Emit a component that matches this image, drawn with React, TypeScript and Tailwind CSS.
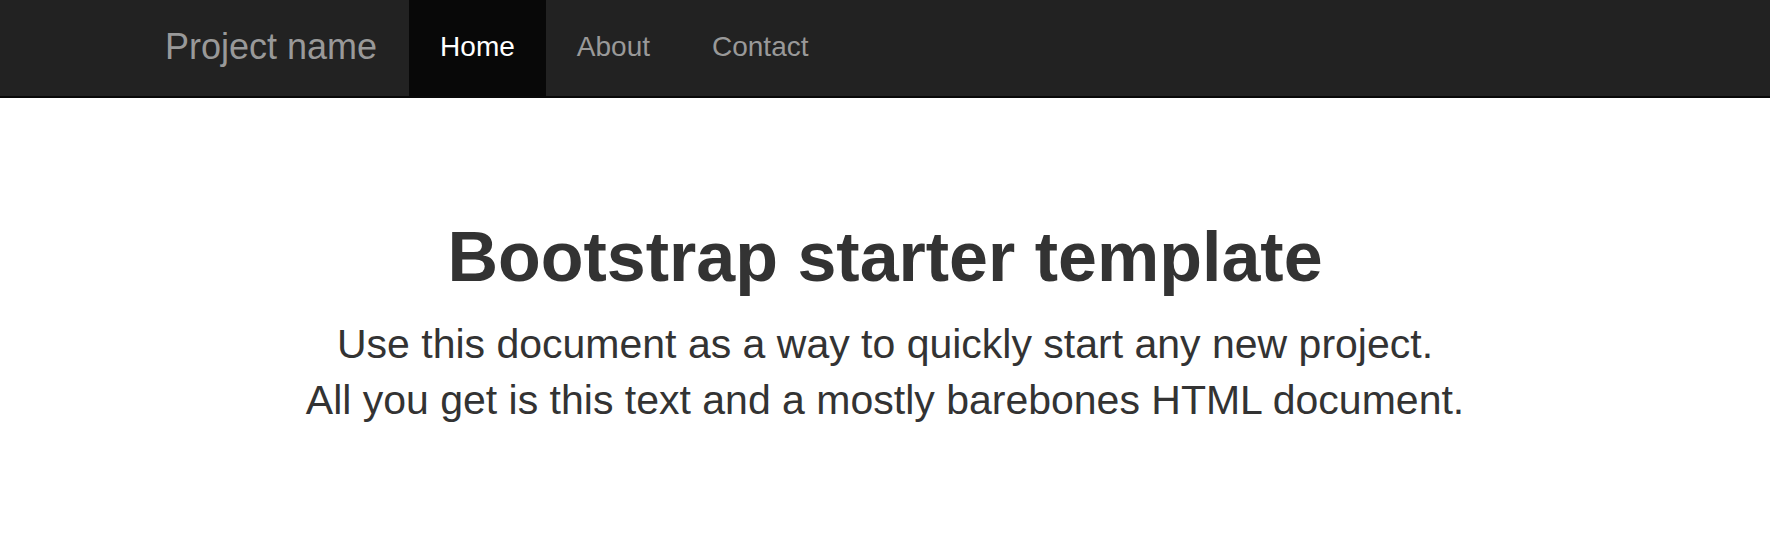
const NAV_ITEMS = [
  { label: 'Home', active: true },
  { label: 'About', active: false },
  { label: 'Contact', active: false },
];

function Navbar() {
  return (
    <nav className="h-[98px] border-b-2 border-[#080808] bg-[#222]">
      <div className="flex h-full items-stretch pl-[134px]">
        <a
          href="#"
          className="flex items-center pl-[31px] pr-[32px] pb-[2px] text-[36px] text-[#999] no-underline"
        >
          Project name
        </a>
        <ul className="flex items-stretch">
          {NAV_ITEMS.map((item) => (
            <li key={item.label} className="flex">
              <a
                href="#"
                className={`flex items-center px-[31px] pb-[3px] text-[28px] ${
                  item.active ? 'bg-[#080808] text-white' : 'text-[#999]'
                }`}
              >
                {item.label}
              </a>
            </li>
          ))}
        </ul>
      </div>
    </nav>
  );
}

export default function App() {
  return (
    <div className="min-h-[536px] bg-white font-['Liberation_Sans',Arial,sans-serif] text-[#333]">
      <Navbar />
      <main className="text-center">
        <h1 className="mt-[119px] text-[70px] font-bold leading-[80px]">
          Bootstrap starter template
        </h1>
        <p className="mt-[19px] text-[41px] font-light leading-[56px]">
          Use this document as a way to quickly start any new project.
          <br />
          All you get is this text and a mostly barebones HTML document.
        </p>
      </main>
    </div>
  );
}
